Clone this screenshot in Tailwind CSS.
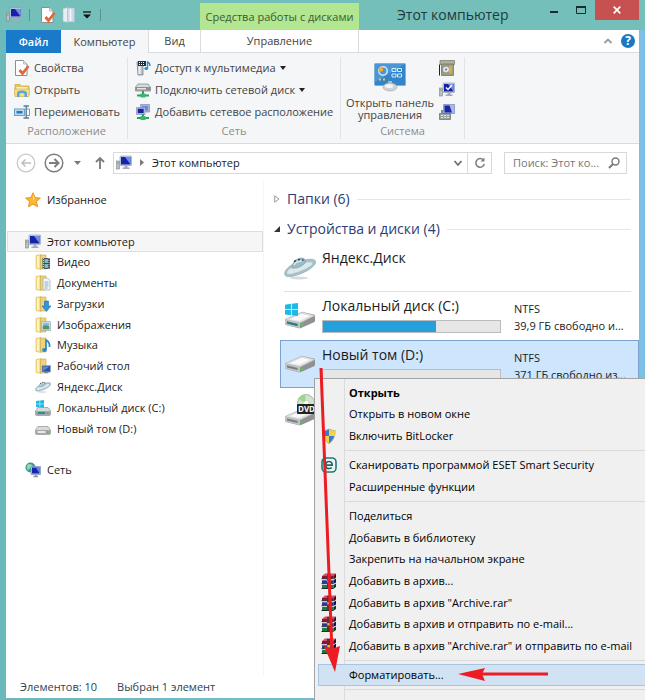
<!DOCTYPE html>
<html lang="ru">
<head>
    <meta charset="UTF-8">
    <meta name="viewport" content="width=device-width, initial-scale=1.0">
    <title>Этот компьютер</title>
    <script src="https://cdn.jsdelivr.net/npm/@tailwindcss/browser@4"></script>
</head>
<body class="font-['Open_Sans','Noto_Sans',sans-serif] text-[11px] leading-4 text-[#1b1b1b]">

    <!-- Shared icons -->
    <svg class="hidden">
        <symbol id="i-pc" viewBox="0 0 16 16">
            <rect x="0.5" y="6" width="3" height="8" fill="#b9bfc4" stroke="#7d858c" stroke-width=".6"/>
            <rect x="1" y="7.500" width="1.500" height="1" fill="#4fae4f"/>
            <rect x="4" y="1" width="11.500" height="9.500" rx=".6" fill="#c8d3e6" stroke="#8693b5" stroke-width=".6"/>
            <rect x="5" y="2" width="9.500" height="7.500" fill="#1423a8"/>
            <path d="M9 2h5.500v7.500z" fill="#6f8ce8"/>
            <path d="M8.500 10.500h3v2h2V14h-7v-1.500h2z" fill="#a4acb5"/>
        </symbol>
        <symbol id="i-props" viewBox="0 0 16 16">
            <path d="M1.500 .5h8l3.500 3.500v11.500H1.500z" fill="#fff" stroke="#8d8d8d"/>
            <path d="M9.500 .5V4H13" fill="#e4e4e4" stroke="#a5a5a5" stroke-width=".7"/>
            <path d="M5.500 10l3 3.500L14.500 6" fill="none" stroke="#e0683a" stroke-width="2.800"/>
        </symbol>
        <symbol id="i-folder" viewBox="0 0 16 16">
            <path d="M1 1.500l5-1v15l-5-1z" fill="#f6e08c" stroke="#d9bb58" stroke-width=".6"/>
            <path d="M5.500 1h5.500v14H5.500z" fill="#edd37c" stroke="#cda945" stroke-width=".6"/>
            <path d="M2 2.500l2-.4v12l-2-.4z" fill="#fdf3c2"/>
        </symbol>
        <symbol id="i-ufo" viewBox="0 0 32 24">
            <ellipse cx="15" cy="22" rx="9" ry="1.500" fill="#d5dadc"/>
            <path d="M1 19C-1 14 7 8 17 5s15-2 14.500 1.500S24 15 16 18 3 21.500 1 19z" fill="#a9c1c8" stroke="#8aa5ac" stroke-width=".7"/>
            <path d="M3 17c0-3 7-7.500 14-9.500s12-1.500 11.500 .3S22 13 15 15.500 4 19 3 17z" fill="#dbe9ed"/>
            <path d="M8 12c0-4.500 2.500-8 7-9.500s7 1 6.500 4c-3 3.500-9 6.500-13.500 5.500z" fill="#9dbcc5" stroke="#7297a1" stroke-width=".6"/>
            <path d="M10 5.500l2-1M14 3.800l2-.3M18 3.800l1.500 .6" stroke="#36464c" stroke-width="1.500"/>
            <path d="M10 9c1-2 4-4 8-4" stroke="#eefafc" stroke-width="1.200" fill="none"/>
        </symbol>
        <symbol id="i-drive" viewBox="0 0 32 18">
            <path d="M1 8.500L17 1.500q1-.5 2-.2L30 3.500q1 .3 1 1V10q0 .8-1 1.300L17 17q-1 .5-2 .2L2 14q-1-.3-1-1z" fill="#8f9294"/>
            <path d="M1 8.500L17 1.500q1-.5 2-.2L31 4.500 16 12z" fill="#dfe1e1" stroke="#b6b9ba" stroke-width=".6"/>
            <path d="M6 8.300L17.500 3 26 4.800l-10.500 5z" fill="#fafafa"/>
            <path d="M1 8.500L16 12v5.300L2 14q-1-.3-1-1z" fill="#bfc3c4"/>
            <path d="M3 10.500l10.500 2.600v2L3 12.400z" fill="#777c7e"/>
            <path d="M17.500 13.500l2-1v2.200l-2 1z" fill="#58c93c"/>
        </symbol>
        <symbol id="i-drive-sm" viewBox="0 0 16 9">
            <path d="M3 .5h10L15.500 4v3.500q0 1-1 1h-13q-1 0-1-1V4z" fill="#d9dbdb" stroke="#8f9294" stroke-width=".7"/>
            <path d="M.8 4h14.400v3.500q0 .7-.7 .7h-13q-.7 0-.7-.7z" fill="#a4a7a9"/>
            <path d="M2.500 5h8v2h-8z" fill="#e7e9e9"/>
            <rect x="12" y="5.500" width="1.500" height="1.500" fill="#55b947"/>
        </symbol>
        <symbol id="i-flag" viewBox="0 0 12 12">
            <path d="M0 1.500l5.500-.8v5H0zM6.200 .6L12 0v5.700H6.200zM0 6.400h5.500v5L0 10.600zM6.200 6.400H12V12l-5.800-.8z" fill="#22b8e6"/>
        </symbol>
        <symbol id="i-rar" viewBox="0 0 16 16">
            <path d="M1 3l3-2.500h11L12.500 3z" fill="#d64a6a"/>
            <path d="M1 3h11.500v2.500H1z" fill="#8f1238"/>
            <path d="M12.500 3L15 .5v4l-2.500 2z" fill="#34101c"/>
            <path d="M1 7l2-1h11.500l-2 1.500z" fill="#e9e9f6"/>
            <path d="M1 7.300h11.500v3H1z" fill="#2b3794"/>
            <path d="M12.500 7.300L15 5.500v4l-2.500 1.600z" fill="#101540"/>
            <path d="M1 11.500l2-.8h11.500l-2 1z" fill="#eef6ee"/>
            <path d="M1 12h11.500v3.500H1z" fill="#1b7a47"/>
            <path d="M12.500 12L15 10.500v3.500l-2.500 1.800z" fill="#0b3a20"/>
            <path d="M.5 5.700h12M.5 10.700h12M.5 15.500h12" stroke="#161616" stroke-width=".9"/>
            <path d="M6 .8h3.500v14.700H6z" fill="#6e2a22"/>
            <path d="M6.300 7h2.800v2.500H6.300z" fill="#e6b93a"/>
        </symbol>
    </svg>

    <div class="relative flex h-screen flex-col overflow-hidden bg-linear-to-r from-[#6cb9bc] to-[#7cc0e8] px-1.5">

        <!-- Title bar -->
        <header class="-mx-1.5 flex h-[30px] shrink-0 items-stretch bg-[#74bfb9] px-1.5">
            <div class="flex w-[194px] items-center">
                <svg class="size-4"><use href="#i-pc"/></svg>
                <span class="ml-[7px] h-3 w-px bg-[#5b8f92]"></span>
                <button class="ml-2.5" aria-label="Свойства"><svg class="size-4"><use href="#i-props"/></svg></button>
                <button class="ml-1.5" aria-label="Новая папка">
                    <svg class="size-4" viewBox="0 0 16 16">
                        <path d="M1 1.500l5-1v15l-5-1z" fill="#e8eef5" stroke="#a9bccb" stroke-width=".6"/>
                        <path d="M5.500 1h7v14h-7z" fill="#cbdae8" stroke="#a9bccb" stroke-width=".6"/>
                        <path d="M8.500 2v12" stroke="#f5f8fb" stroke-width="1.500"/>
                    </svg>
                </button>
                <button class="ml-1" aria-label="Настройка панели">
                    <svg class="h-2 w-2.5" viewBox="0 0 10 8"><path d="M1 1h8" stroke="#111" stroke-width="1.300"/><path d="M1 3.500h8L5 7.500z" fill="#111"/></svg>
                </button>
                <span class="ml-2 h-3 w-px bg-[#5b8f92]"></span>
            </div>
            <div class="mt-[3px] flex w-[159px] items-center justify-center bg-[#b2e690] whitespace-nowrap text-[#3c5a33]">Средства работы с дисками</div>
            <h1 class="flex-1 self-center pl-[38px] text-[14px] whitespace-nowrap text-[#20393b]">Этот компьютер</h1>
            <div class="flex h-5">
                <button class="flex w-[30px] items-center justify-center" aria-label="Свернуть"><svg class="size-2.5" viewBox="0 0 10 10"><path d="M1 7h8" stroke="#1a2c2d" stroke-width="2"/></svg></button>
                <button class="flex w-6 items-center justify-center" aria-label="Развернуть"><svg class="h-2 w-2.5" viewBox="0 0 10 8"><path d="M.5 1h9v6.500h-9z" fill="none" stroke="#1a2c2d"/><path d="M0 1h10" stroke="#1a2c2d" stroke-width="2"/></svg></button>
                <button class="ml-0.5 flex w-11 items-center justify-center bg-[#c75050]" aria-label="Закрыть"><svg class="size-2" viewBox="0 0 8 8"><path d="M.7 .7l6.600 6.600M7.300 .7L.7 7.300" stroke="#fff" stroke-width="1.700"/></svg></button>
            </div>
        </header>

        <div class="mb-0.5 flex min-h-0 flex-1 flex-col bg-white">

            <!-- Ribbon tabs -->
            <nav class="flex h-[23px] shrink-0 items-stretch border-b border-[#dadbdc] text-[#444]">
                <button class="-mb-px w-[55px] bg-[#1979ca] font-semibold text-white">Файл</button>
                <button class="-mb-px w-[88px] border-r border-[#dadbdc] bg-[#f5f6f7]">Компьютер</button>
                <button class="w-[51px]">Вид</button>
                <button class="w-[159px] border-x border-[#dadbdc]">Управление</button>
                <div class="flex flex-1 items-center justify-end gap-2 pr-1">
                    <button aria-label="Свернуть ленту"><svg class="size-2.5" viewBox="0 0 10 10"><path d="M1.500 7L5 3.500 8.500 7" fill="none" stroke="#9a9a9a" stroke-width="1.800"/></svg></button>
                    <button class="size-3.5 rounded-full bg-[#1a78c2] text-[12px] leading-3.5 font-bold text-white" aria-label="Справка">?</button>
                </div>
            </nav>

            <!-- Ribbon -->
            <section class="flex h-[91px] shrink-0 border-b border-[#dadbdc] bg-[#f5f6f7] py-1 whitespace-nowrap text-[#444]">
                <div class="flex w-[122px] flex-col border-r border-[#e2e3e4] pl-2">
                    <button class="flex h-[22px] items-center gap-1"><svg class="size-4"><use href="#i-props"/></svg>Свойства</button>
                    <button class="flex h-[22px] items-center gap-1">
                        <svg class="size-4" viewBox="0 0 16 16">
                            <path d="M1 2.500h5l1 1.500h8v9H1z" fill="#e9c558" stroke="#c29d3a" stroke-width=".6"/>
                            <path d="M2.500 5h11v4h-11z" fill="#fbf3c4"/>
                            <path d="M0 7h16l-1 7.500H1z" fill="#f5dd85" stroke="#cfac4c" stroke-width=".6"/>
                            <path d="M3 15v-3.500q0-3 5-3t5 3V15h-2.500v-3q0-1-2.500-1t-2.500 1v3z" fill="#57a8dc"/>
                        </svg>Открыть
                    </button>
                    <button class="flex h-[22px] items-center gap-1">
                        <svg class="size-4" viewBox="0 0 16 16">
                            <rect x=".5" y="5" width="10" height="6.500" fill="#b9dcf4" stroke="#6a9fc6"/>
                            <path d="M2.500 7h6v2.500h-6z" fill="#2c77b4"/>
                            <path d="M9.500 2h5.500M9.500 14h5.500M12.200 2v12" stroke="#5c7d94" stroke-width="1.400"/>
                            <path d="M13 5h2.500v6.500H13" fill="none" stroke="#6a9fc6"/>
                        </svg>Переименовать
                    </button>
                    <p class="-ml-2 mt-auto text-center text-[#8c8c8c]">Расположение</p>
                </div>
                <div class="flex w-[213px] flex-col border-r border-[#e2e3e4] pl-[7px]">
                    <button class="flex h-[22px] items-center gap-1">
                        <svg class="size-4" viewBox="0 0 16 16">
                            <path d="M2 2h6v13H3z" fill="#bfc4c8" stroke="#6f767b" stroke-width=".7"/>
                            <path d="M3.500 5h2v9h-2z" fill="#eef0f1"/>
                            <path d="M3 1h8v5H3z" fill="#222f38"/>
                            <path d="M4 2h1v1H4zM6 2h1v1H6zM8 2h1v1H8zM4 4h1v1H4zM6 4h1v1H6zM8 4h1v1H8z" fill="#fff"/>
                            <path d="M12.500 8.500V2q2.500 1 2.500 4" fill="none" stroke="#2d8ccb" stroke-width="1.400"/>
                            <ellipse cx="11.200" cy="8.500" rx="1.900" ry="1.500" fill="#2d8ccb"/>
                        </svg>Доступ к мультимедиа
                        <svg class="h-1 w-1.5" viewBox="0 0 6 4"><path d="M0 0h6L3 4z" fill="#222"/></svg>
                    </button>
                    <button class="flex h-[22px] items-center gap-1">
                        <svg class="size-4" viewBox="0 0 16 16">
                            <path d="M3 2h10l2.500 3v4H.5V5z" fill="#d9dbdb" stroke="#7d8183" stroke-width=".7"/>
                            <path d="M.8 5h14.400v3.700H.8z" fill="#8c9092"/><path d="M2 6h9v1.500H2z" fill="#e3e5e5"/>
                            <path d="M8 9v4M2 13.500h12" stroke="#27a360" stroke-width="2"/><path d="M5.500 11.500h5v4h-5z" fill="#36b873"/>
                        </svg>Подключить сетевой диск
                        <svg class="h-1 w-1.5" viewBox="0 0 6 4"><path d="M0 0h6L3 4z" fill="#222"/></svg>
                    </button>
                    <button class="flex h-[22px] items-center gap-1">
                        <svg class="size-4" viewBox="0 0 16 16">
                            <path d="M5.500 .5h9v7.500h-9z" fill="#a9b5d8" stroke="#7f8cb4" stroke-width=".7"/><path d="M7 2h6v4.500H7z" fill="#6b86dc"/>
                            <path d="M1.500 3.500h8.500v7H1.500z" fill="#c4cce4" stroke="#7f8cb4" stroke-width=".7"/><path d="M2.700 4.700h6v4.500h-6z" fill="#1523a0"/>
                            <path d="M8 10v4M2 14h12" stroke="#27a360" stroke-width="2"/><path d="M5.500 12h5v4h-5z" fill="#36b873"/>
                        </svg>Добавить сетевое расположение
                    </button>
                    <p class="-ml-[7px] mt-auto text-center text-[#8c8c8c]">Сеть</p>
                </div>
                <div class="flex w-[124px] flex-col border-r border-[#e2e3e4]">
                    <div class="flex">
                        <button class="flex w-[98px] flex-col items-center pt-1 leading-3">
                            <svg class="mb-1 h-8 w-8" viewBox="0 0 32 30">
                                <rect x=".5" y="1.500" width="31" height="22" rx="1" fill="#3284cb" stroke="#7fb0d9"/>
                                <path d="M1 2h30L1 20z" fill="#58a3df" opacity=".6"/>
                                <circle cx="9" cy="9" r="4.200" fill="none" stroke="#d9e8f4" stroke-width="1.500"/><path d="M9 9V4.500a4.500 4.500 0 0 0-4.300 5.500z" fill="#f3a93c"/>
                                <path d="M18 6.500h4v3h-4zM23.500 6.500h4v3h-4zM18 12h4v3h-4zM23.500 12h4v3h-4z" fill="none" stroke="#d3ecfb"/>
                                <path d="M5 17.500h2M9 17.500h2" stroke="#f4c04c" stroke-width="2"/>
                                <path d="M14 19h4v5h-4z" fill="#b5bcc1"/><ellipse cx="16" cy="25" rx="7" ry="4" fill="#cfd3d6" stroke="#9fa5a9" stroke-width=".6"/>
                                <ellipse cx="15" cy="24" rx="4" ry="2" fill="#f3f4f5"/>
                            </svg>
                            <span>Открыть панель<br>управления</span>
                        </button>
                        <div class="flex flex-col">
                            <button class="flex h-[22px] items-center" aria-label="Удалить или изменить программу">
                                <svg class="size-4" viewBox="0 0 16 16"><path d="M1 .5h14.500v4H1z" fill="#b4aea0" stroke="#77746b" stroke-width=".7"/><path d="M2.500 4h12v11.500h-12z" fill="#9aa07b" stroke="#6b6e58" stroke-width=".7"/><circle cx="7" cy="9.500" r="3.700" fill="#dfe3e5" stroke="#7c8488"/><circle cx="7" cy="9.500" r="1" fill="#6b7580"/><path d="M10 6h3v7h-3z" fill="#d7ad4a"/><path d="M.5 4.500v11" stroke="#222"/></svg>
                            </button>
                            <button class="flex h-[22px] items-center" aria-label="Свойства системы">
                                <svg class="size-4" viewBox="0 0 16 16"><use href="#i-pc"/><path d="M7 5.500l2 2 4-4.500" fill="none" stroke="#fff" stroke-width="1.500"/></svg>
                            </button>
                            <button class="flex h-[22px] items-center" aria-label="Управление">
                                <svg class="size-4" viewBox="0 0 16 16"><path d="M4.500 .5h11v9h-11z" fill="#a9b9e4" stroke="#7886b4" stroke-width=".7"/><path d="M5.500 1.500h5L13 8.500H5.500z" fill="#1727a5"/><path d="M.5 9.500h11v6H.5z" fill="#9aa29f" stroke="#646b69" stroke-width=".7"/><path d="M2 11.500h8M2 13.500h8" stroke="#e5e8e7" stroke-dasharray="2 1"/><path d="M2 6h2v4H2z" fill="#7d8894"/></svg>
                            </button>
                        </div>
                    </div>
                    <p class="mt-auto text-center text-[#8c8c8c]">Система</p>
                </div>
            </section>

            <!-- Address bar -->
            <div class="flex h-[37px] shrink-0 items-center pr-3 pl-2.5">
                <button aria-label="Назад"><svg class="size-5" viewBox="0 0 20 20"><circle cx="10" cy="10" r="8.800" fill="none" stroke="#c9c9c9" stroke-width="1.300"/><path d="M15 10H6M9.500 6.500L6 10l3.500 3.500" fill="none" stroke="#c0c0c0" stroke-width="1.600"/></svg></button>
                <button class="ml-2" aria-label="Вперед"><svg class="size-5" viewBox="0 0 20 20"><circle cx="10" cy="10" r="8.800" fill="none" stroke="#7d7d7d" stroke-width="1.500"/><path d="M5 10h9M10.500 6L14.500 10l-4 4" fill="none" stroke="#7d7d7d" stroke-width="2"/></svg></button>
                <button class="ml-2.5" aria-label="Последние расположения"><svg class="h-1 w-[7px]" viewBox="0 0 7 4"><path d="M0 0h7L3.500 4z" fill="#7a7a7a"/></svg></button>
                <button class="ml-3" aria-label="Вверх"><svg class="size-3.5" viewBox="0 0 14 14"><path d="M7 13V2M3 6l4-4 4 4" fill="none" stroke="#7d7d7d" stroke-width="1.900"/></svg></button>
                <div class="ml-1.5 flex h-[22px] flex-1 items-center border border-[#d9d9d9] pl-0.5">
                    <svg class="size-4"><use href="#i-pc"/></svg>
                    <svg class="ml-2 h-[7px] w-1" viewBox="0 0 4 7"><path d="M0 0l4 3.500L0 7z" fill="#7a7a7a"/></svg>
                    <a href="#" class="ml-2 flex-1 whitespace-nowrap">Этот компьютер</a>
                    <button class="mr-1" aria-label="История"><svg class="size-2.5" viewBox="0 0 10 10"><path d="M1.500 3L5 7l3.500-4" fill="none" stroke="#6f6f6f" stroke-width="1.800"/></svg></button>
                    <button class="flex h-full w-6 items-center justify-center border-l border-[#d9d9d9]" aria-label="Обновить"><svg class="size-3" viewBox="0 0 12 12"><path d="M9.500 3.200A4.300 4.300 0 1 0 10.300 7" fill="none" stroke="#7d7d7d" stroke-width="1.500"/><path d="M6.500 4.500h4V.5z" fill="#7d7d7d"/></svg></button>
                </div>
                <label class="ml-3 flex h-[22px] w-[123px] items-center border border-[#d9d9d9] pr-1.5 pl-2">
                    <input type="text" aria-label="Поиск" placeholder="Поиск: Этот ко..." class="w-full min-w-0 outline-none placeholder:text-[#767676]">
                    <svg class="size-3 shrink-0" viewBox="0 0 12 12"><circle cx="7.500" cy="4.500" r="3.500" fill="none" stroke="#7a7a7a" stroke-width="1.400"/><path d="M5 7L1 11" stroke="#7a7a7a" stroke-width="1.900"/></svg>
                </label>
            </div>

            <div class="flex min-h-0 flex-1">
                <!-- Navigation pane -->
                <nav class="w-[258px] shrink-0 border-r border-[#f5f5f5] pt-2 pl-px">
                    <a href="#" class="flex h-[21px] items-center gap-1.5 pl-[18px]">
                        <svg class="size-4" viewBox="0 0 16 16"><path d="M8 .7l2.200 4.800 5.200 .6-3.900 3.500 1.100 5.200L8 12.200l-4.600 2.600 1.100-5.200L.6 6.100l5.200-.6z" fill="#fbb62c" stroke="#d98a1e" stroke-width=".8"/><path d="M8 2.800l1.500 3.400L8 9z" fill="#ffe59a"/></svg>Избранное
                    </a>
                    <a href="#" class="mt-[21px] flex h-[21px] items-center gap-1.5 border border-[#dedede] bg-[#f6f6f6] pl-[17px]">
                        <svg class="size-4"><use href="#i-pc"/></svg>Этот компьютер
                    </a>
                    <div class="grid h-[187px] grid-rows-9">
                        <a href="#" class="flex items-center gap-1.5 pl-7">
                            <svg class="size-4" viewBox="0 0 16 16"><use href="#i-folder"/><path d="M7.500 4H15v11H7.500z" fill="#3f4f58"/><path d="M9.500 5h3.500v4H9.500zM9.500 10h3.500v4H9.500z" fill="#7fb8bd"/><path d="M8.500 4v11M14 4v11" stroke="#c8d0d4" stroke-dasharray="1 1"/></svg>Видео
                        </a>
                        <a href="#" class="flex items-center gap-1.5 pl-7">
                            <svg class="size-4" viewBox="0 0 16 16"><use href="#i-folder"/><path d="M8 3h4.500L15 5.500V15H8z" fill="#f3f6f8" stroke="#9dabb5" stroke-width=".7"/><path d="M9.500 7h4M9.500 9h4M9.500 11h4M9.500 13h3" stroke="#7b9db8" stroke-width=".8"/></svg>Документы
                        </a>
                        <a href="#" class="flex items-center gap-1.5 pl-7">
                            <svg class="size-4" viewBox="0 0 16 16"><use href="#i-folder"/><path d="M9.500 5h4v5H16l-4.500 5.500L7 10h2.500z" fill="#2f97dc" stroke="#1f6fae" stroke-width=".6"/></svg>Загрузки
                        </a>
                        <a href="#" class="flex items-center gap-1.5 pl-7">
                            <svg class="size-4" viewBox="0 0 16 16"><use href="#i-folder"/><path d="M6.500 4.500h9v9h-9z" fill="#fff" stroke="#8fa3b0" stroke-width=".7"/><path d="M7.500 5.500h7v4h-7z" fill="#7fc0e4"/><path d="M7.500 9.500l3-1.500 4 1.500v3h-7z" fill="#5b9166"/></svg>Изображения
                        </a>
                        <a href="#" class="flex items-center gap-1.5 pl-7">
                            <svg class="size-4" viewBox="0 0 16 16"><use href="#i-folder"/><path d="M11 13V3q4 2 3.500 7" fill="none" stroke="#2a8bc9" stroke-width="1.700"/><ellipse cx="9.500" cy="13" rx="2.400" ry="2" fill="#2a8bc9"/></svg>Музыка
                        </a>
                        <a href="#" class="flex items-center gap-1.5 pl-7">
                            <svg class="size-4" viewBox="0 0 16 16"><use href="#i-folder"/><path d="M7 7.500h8.500v6.500H7z" fill="#2a55a6" stroke="#9aa9c4" stroke-width=".7"/><path d="M8 8.500h6.500L8 13z" fill="#5b8ad6"/><path d="M9.500 14.500h4" stroke="#7c8791" stroke-width="1.500"/></svg>Рабочий стол
                        </a>
                        <a href="#" class="flex items-center gap-1.5 pl-7"><svg class="h-3 w-4"><use href="#i-ufo"/></svg>Яндекс.Диск</a>
                        <a href="#" class="flex items-center gap-1.5 pl-7">
                            <svg class="size-4" viewBox="0 0 16 16"><use href="#i-flag" x="1" y="0" width="8" height="8"/><use href="#i-drive-sm" x="0" y="7" width="16" height="9"/><path d="M2.500 12h8v2h-8z" fill="#2e8f90"/></svg>Локальный диск (C:)
                        </a>
                        <a href="#" class="flex items-center gap-1.5 pl-7"><svg class="mt-1 h-[9px] w-4"><use href="#i-drive-sm"/></svg>Новый том (D:)</a>
                    </div>
                    <a href="#" class="mt-5 flex h-[21px] items-center gap-1.5 pl-[18px]">
                        <svg class="size-4" viewBox="0 0 16 16"><circle cx="5.500" cy="5.500" r="5" fill="#2f9a9c"/><path d="M2 3q3-2 5 0t-1 3-3 3q-2-3-1-6z" fill="#8fd9a8"/><path d="M6 4.500h9.500v8H6z" fill="#b9c6ea" stroke="#7f8cb4" stroke-width=".7"/><path d="M7 5.500h7.500v6H7z" fill="#1525b0"/><path d="M11 5.500h3.500v6z" fill="#6a87e6"/><path d="M8.500 14.500h4.500M10.800 12.500v2" stroke="#8b949c" stroke-width="1.500"/></svg>Сеть
                    </a>
                </nav>

                <!-- Files -->
                <main class="min-w-0 flex-1 pt-[3px] pl-4">
                    <h2 class="-ml-[6px] flex h-[30px] items-center gap-[7px] pr-2 text-[14px] whitespace-nowrap text-[#2b3c78]">
                        <svg class="h-2 w-[6px]" viewBox="0 0 6 8"><path d="M.7 .8L5 4 .7 7.200z" fill="#fff" stroke="#9a9a9a"/></svg>Папки (6)<span class="h-px flex-1 bg-[#e3e6ea]"></span>
                    </h2>
                    <h2 class="-ml-[6px] flex h-[30px] items-center gap-[7px] pr-2 text-[14px] whitespace-nowrap text-[#2b3c78]">
                        <svg class="size-[6px]" viewBox="0 0 6 6"><path d="M6 0v6H0z" fill="#333"/></svg>Устройства и диски (4)<span class="h-px flex-1 bg-[#e3e6ea]"></span>
                    </h2>
                    <div class="mr-2 ml-1 flex h-[48px] border-b border-[#dfe1e4] pt-1">
                        <svg class="mt-2 h-6 w-8"><use href="#i-ufo"/></svg>
                        <span class="ml-[6px] text-[14px] leading-5">Яндекс.Диск</span>
                    </div>
                    <div class="flex h-[48px] pt-1 pl-1">
                        <svg class="mt-1 h-9 w-8 shrink-0" viewBox="0 0 32 36"><use href="#i-drive" x="0" y="11" width="32" height="18"/><path d="M3 21.500l10.500 2.600v2L3 23.400z" fill="#1d7f86"/><use href="#i-flag" x="1" y="3" width="13" height="13"/></svg>
                        <div class="ml-[6px] w-[179px] shrink-0">
                            <p class="text-[14px] leading-5 whitespace-nowrap">Локальный диск (C:)</p>
                            <div class="mt-1 h-[13px] border border-[#bcbcbc] bg-[#e6e6e6]"><div class="h-full bg-[#26a0da]" style="width: 64%"></div></div>
                        </div>
                        <div class="ml-[13px] pt-1 leading-[17px] whitespace-nowrap"><p>NTFS</p><p>39,9 ГБ свободно и...</p></div>
                    </div>
                    <div class="flex h-[48px] border border-[#7da2ce] bg-[#cde6fe] pt-1 pl-[3px]">
                        <svg class="mt-2.5 h-[18px] w-8 shrink-0"><use href="#i-drive"/></svg>
                        <div class="ml-[6px] w-[179px] shrink-0">
                            <p class="text-[14px] leading-5 whitespace-nowrap">Новый том (D:)</p>
                            <div class="mt-1 h-[13px] border border-[#bcbcbc] bg-[#e6e6e6]"></div>
                        </div>
                        <div class="ml-[13px] pt-1 leading-[17px] whitespace-nowrap"><p>NTFS</p><p>371 ГБ свободно из...</p></div>
                    </div>
                    <div class="pt-1.5 pl-1">
                        <svg class="h-8 w-8" viewBox="0 0 32 32">
                            <use href="#i-drive" x="0" y="14" width="32" height="18"/>
                            <circle cx="22" cy="9" r="8.500" fill="#cfe3cf" stroke="#92a096" stroke-width=".7"/><path d="M22 9L14 5q2-4 7-4.400z" fill="#9fd48e"/><circle cx="22" cy="9" r="2" fill="#fff"/>
                            <rect x="13" y="10" width="19" height="10" rx="1" fill="#222"/><text x="14" y="18" font-size="8" font-weight="700" fill="#fff">DVD</text>
                        </svg>
                    </div>
                </main>
            </div>

            <!-- Status bar -->
            <footer class="flex h-[22px] shrink-0 items-center gap-5 pl-3.5 text-[#2f3f52]">
                <span>Элементов: 10</span><span>Выбран 1 элемент</span>
            </footer>
        </div>

        <!-- Context menu -->
        <div role="menu" class="absolute top-[378px] left-[314px] w-[345px] border border-[#a3a3a3] bg-[#f0f0f0] p-[3px] whitespace-nowrap text-black">
            <span class="absolute inset-y-0 left-[29px] w-px bg-[#dcdcdc]"></span>
            <div class="grid h-[65px] grid-rows-3">
                <button role="menuitem" class="pl-[31px] text-left font-bold">Открыть</button>
                <button role="menuitem" class="pl-[31px] text-left">Открыть в новом окне</button>
                <button role="menuitem" class="flex items-center gap-3 pl-[3px]">
                    <svg class="size-4" viewBox="0 0 16 16"><path d="M8 1q3 2 6 1.500Q14.500 11 8 15.500 1.500 11 2 2.500 5 3 8 1z" fill="#3a7cc9" stroke="#9aa3aa"/><path d="M8 1q3 2 6 1.500V8H8zM2.200 8H8v7.500Q3 12 2.200 8z" fill="#f2d24a"/></svg>Включить BitLocker
                </button>
            </div>
            <hr class="my-[3px] ml-[27px] border-[#dadada]">
            <div class="grid h-[44px] grid-rows-2">
                <button role="menuitem" class="flex items-center gap-3 pl-[3px]">
                    <svg class="size-4" viewBox="0 0 16 16"><rect x="1" y="1" width="14" height="14" rx="4" fill="#eef6f5" stroke="#1f7a76" stroke-width="1.600"/><path d="M4.800 8.200h6.400q0-3.700-3.200-3.700T4.800 8.200 8.300 11.500q1.500 0 2.500-1" fill="none" stroke="#1f6a68" stroke-width="1.700"/></svg>Сканировать программой ESET Smart Security
                </button>
                <button role="menuitem" class="pl-[31px] text-left">Расширенные функции</button>
            </div>
            <hr class="my-[3px] ml-[27px] border-[#dadada]">
            <div class="grid h-[152px] grid-rows-7">
                <button role="menuitem" class="pl-[31px] text-left">Поделиться</button>
                <button role="menuitem" class="pl-[31px] text-left">Добавить в библиотеку</button>
                <button role="menuitem" class="pl-[31px] text-left">Закрепить на начальном экране</button>
                <button role="menuitem" class="flex items-center gap-3 pl-[3px]"><svg class="size-4"><use href="#i-rar"/></svg>Добавить в архив...</button>
                <button role="menuitem" class="flex items-center gap-3 pl-[3px]"><svg class="size-4"><use href="#i-rar"/></svg>Добавить в архив "Archive.rar"</button>
                <button role="menuitem" class="flex items-center gap-3 pl-[3px]"><svg class="size-4"><use href="#i-rar"/></svg>Добавить в архив и отправить по e-mail...</button>
                <button role="menuitem" class="flex items-center gap-3 pl-[3px]"><svg class="size-4"><use href="#i-rar"/></svg>Добавить в архив "Archive.rar" и отправить по e-mail</button>
            </div>
            <hr class="my-[3px] ml-[27px] border-[#dadada]">
            <button role="menuitem" class="relative block h-[22px] w-full border border-[#a5c5e2] bg-[#d1e2f2] pl-[30px] text-left">Форматировать...</button>
            <hr class="my-[3px] ml-[27px] border-[#dadada]">
            <button role="menuitem" class="block h-[22px] w-full pl-[31px] text-left">Копировать</button>
        </div>

        <!-- Pointer arrows -->
        <svg class="pointer-events-none absolute top-0 left-0 h-[700px] w-[645px]" viewBox="0 0 645 700" fill="#ed1c24">
            <path d="M321 368l11 284" stroke="#ed1c24" stroke-width="3"/>
            <path d="M324 646l8 3 8-3-5 26z"/>
            <path d="M480 674h68" stroke="#ed1c24" stroke-width="3"/>
            <path d="M458 674l27-6-3 6 3 7z"/>
        </svg>
    </div>
</body>
</html>
